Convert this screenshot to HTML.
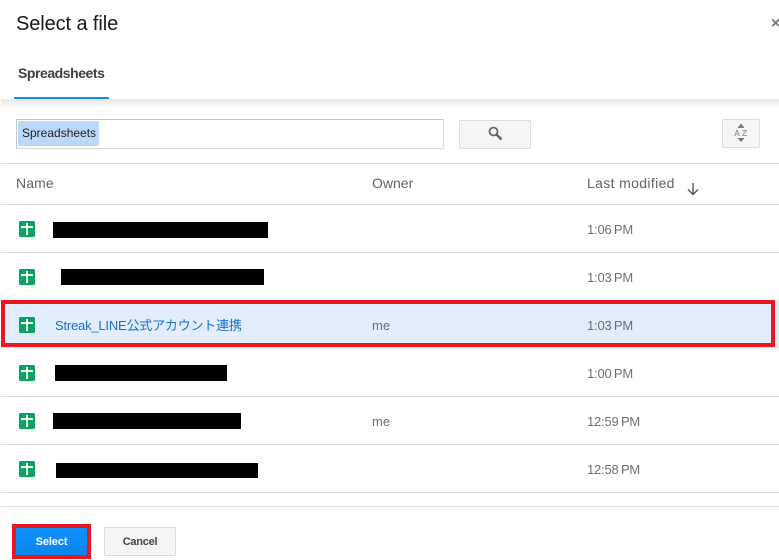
<!DOCTYPE html>
<html><head><meta charset="utf-8">
<style>
html,body{margin:0;padding:0;background:#fff}
body{width:779px;height:560px;position:relative;overflow:hidden;font-family:"Liberation Sans","Noto Sans CJK JP",sans-serif;color:#5f6368}
.a{position:absolute;white-space:nowrap}
.line{position:absolute;left:1px;right:0;height:1px;background:#dfdfe2}
.black{position:absolute;background:#000}
.t{position:absolute;left:587px;font-size:13px;line-height:16px;color:#6b6f74;letter-spacing:-.2px;word-spacing:-1px;white-space:nowrap}
.ic{position:absolute;left:19px;width:16px;height:16px}
</style></head><body>
<div class="a" style="left:16px;top:12px;font-size:20px;line-height:25px;color:#1a1a1a;letter-spacing:-.1px">Select a file</div>
<div class="a" style="left:771px;top:15px;font-size:16px;line-height:18px;font-weight:bold;color:#777">×</div>
<div class="a" style="left:18px;top:65px;font-size:14px;line-height:16px;font-weight:bold;color:#3c4043;letter-spacing:-.45px">Spreadsheets</div>
<div class="a" style="left:14px;top:97px;width:95px;height:2px;background:#1a8cf0"></div>
<div class="a" style="left:1px;top:99px;right:0;height:12px;background:linear-gradient(#e8e8e8,#fff 85%)"></div>

<div class="a" style="left:16px;top:119px;width:426px;height:28px;border:1px solid #c4c4c4;border-bottom-color:#d9d9d9;border-right-color:#d9d9d9;background:#fff"></div>
<div class="a" style="left:18px;top:121px;width:81px;height:25px;background:#bbd8fb;border-radius:2px;font-size:12px;line-height:24px;color:#202124;padding-left:4px;box-sizing:border-box">Spreadsheets</div>

<div class="a" style="left:459px;top:120px;width:70px;height:27px;background:#f5f5f5;border:1px solid #dcdcdc;border-radius:2px"></div>
<svg class="a" style="left:488px;top:126px" width="15" height="15" viewBox="0 0 15 15"><circle cx="5.5" cy="5.5" r="4" fill="none" stroke="#666" stroke-width="1.8"/><path d="M8.5 8.5L13.5 13.5" stroke="#666" stroke-width="2.6"/></svg>

<div class="a" style="left:722px;top:119px;width:36px;height:27px;background:#f5f5f5;border:1px solid #dcdcdc;border-radius:2px"></div>
<svg class="a" style="left:732px;top:123px" width="18" height="20" viewBox="0 0 18 20"><path d="M9 0.5L12.5 5H5.5Z" fill="#777"/><path d="M5.5 15H12.5L9 19Z" fill="#777"/><text x="2" y="13" font-family="Liberation Sans" font-size="8.5" font-weight="bold" fill="#999">A</text><text x="10" y="13" font-family="Liberation Sans" font-size="8.5" font-weight="bold" fill="#999">Z</text></svg>

<div class="line" style="top:163px"></div>
<div class="a" style="left:16px;top:175px;font-size:14px;line-height:16px;color:#5f6368;letter-spacing:.1px">Name</div>
<div class="a" style="left:372px;top:175px;font-size:14px;line-height:16px;color:#5f6368">Owner</div>
<div class="a" style="left:587px;top:175px;font-size:14px;line-height:16px;color:#5f6368;letter-spacing:.35px">Last modified</div>
<svg class="a" style="left:686px;top:182px" width="14" height="14" viewBox="0 0 14 14"><path d="M7 1V12.5M2 7.5L7 12.5L12 7.5" fill="none" stroke="#555" stroke-width="1.4"/></svg>
<div class="line" style="top:204px"></div>

<div class="line" style="top:252px"></div>
<div class="line" style="top:396px"></div>
<div class="line" style="top:444px"></div>
<div class="line" style="top:492px"></div>
<div class="line" style="top:506px"></div>

<div class="a" style="left:1px;top:300px;right:0;height:49px;background:#e2eefd"></div>
<div class="a" style="left:1px;top:300px;width:766px;height:39px;border:4px solid #e8191c"></div>

<svg class="ic" style="top:221px" viewBox="0 0 16 16"><rect width="16" height="16" rx="1.5" fill="#0ba360"/><path d="M7 2h2v3h5v2H9v7H7V7H2V5h5z" fill="#fff"/></svg>
<svg class="ic" style="top:269px" viewBox="0 0 16 16"><rect width="16" height="16" rx="1.5" fill="#0ba360"/><path d="M7 2h2v3h5v2H9v7H7V7H2V5h5z" fill="#fff"/></svg>
<svg class="ic" style="top:317px" viewBox="0 0 16 16"><rect width="16" height="16" rx="1.5" fill="#0ba360"/><path d="M7 2h2v3h5v2H9v7H7V7H2V5h5z" fill="#fff"/></svg>
<svg class="ic" style="top:365px" viewBox="0 0 16 16"><rect width="16" height="16" rx="1.5" fill="#0ba360"/><path d="M7 2h2v3h5v2H9v7H7V7H2V5h5z" fill="#fff"/></svg>
<svg class="ic" style="top:413px" viewBox="0 0 16 16"><rect width="16" height="16" rx="1.5" fill="#0ba360"/><path d="M7 2h2v3h5v2H9v7H7V7H2V5h5z" fill="#fff"/></svg>
<svg class="ic" style="top:461px" viewBox="0 0 16 16"><rect width="16" height="16" rx="1.5" fill="#0ba360"/><path d="M7 2h2v3h5v2H9v7H7V7H2V5h5z" fill="#fff"/></svg>

<div class="black" style="left:53px;top:222px;width:215px;height:16px"></div>
<div class="black" style="left:61px;top:269px;width:203px;height:16px"></div>
<div class="a" style="left:55px;top:318px;font-size:13px;line-height:16px;color:#1a6fc9;letter-spacing:-.2px">Streak_LINE公式アカウント連携</div>
<div class="black" style="left:55px;top:365px;width:172px;height:16px"></div>
<div class="black" style="left:53px;top:413px;width:188px;height:16px"></div>
<div class="black" style="left:56px;top:463px;width:202px;height:15px"></div>

<div class="a" style="left:372px;top:318px;font-size:13px;line-height:16px;color:#6b6f74">me</div>
<div class="a" style="left:372px;top:414px;font-size:13px;line-height:16px;color:#6b6f74">me</div>

<div class="t" style="top:222px">1:06 PM</div>
<div class="t" style="top:270px">1:03 PM</div>
<div class="t" style="top:318px">1:03 PM</div>
<div class="t" style="top:366px">1:00 PM</div>
<div class="t" style="top:414px">12:59 PM</div>
<div class="t" style="top:462px">12:58 PM</div>

<div class="a" style="left:12px;top:524px;width:71px;height:27px;border:4px solid #e8191c;background:linear-gradient(#1092ff,#0c84ea);color:#fff;font-size:11px;font-weight:bold;line-height:29px;text-align:center;letter-spacing:-.1px;padding-left:0">Select</div>
<div class="a" style="left:104px;top:527px;width:70px;height:27px;border:1px solid #d9d9d9;border-radius:2px;background:#f4f4f4;color:#444;font-size:11px;font-weight:bold;line-height:28px;text-align:center;letter-spacing:-.25px">Cancel</div>
</body></html>
